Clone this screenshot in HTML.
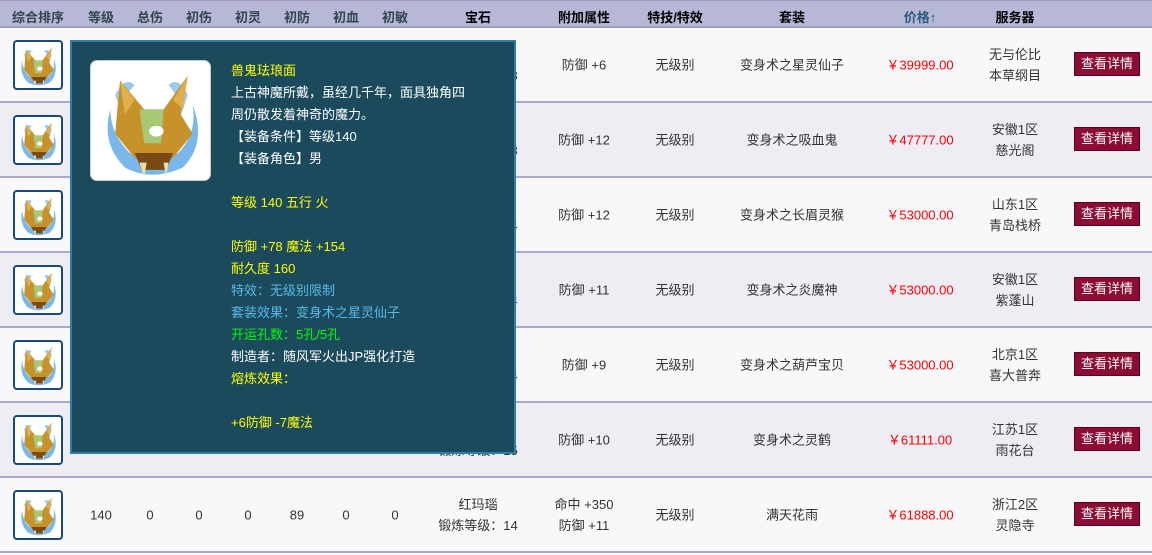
<!DOCTYPE html>
<html><head><meta charset="utf-8"><style>
*{margin:0;padding:0;box-sizing:border-box}
body{width:1152px;height:555px;overflow:hidden;background:#f8f8fb;font-family:"Liberation Sans","WenQuanYi Zen Hei","Noto Sans CJK SC",sans-serif;font-size:13px;color:#333;position:relative}
.hd{position:absolute;left:0;top:0;width:1152px;height:28px;background:#b6b8d6;border-top:1px solid #9a9cc4;border-bottom:2px solid #9a9cc4}
.hd span{position:absolute;top:6px;font-weight:bold;color:#34444f;transform:translateX(-50%);white-space:nowrap}
.row{position:absolute;left:0;width:1152px;height:75px;border-bottom:2px solid #a8aacb}
.row span{position:absolute;transform:translate(-50%,-50%);white-space:nowrap;text-align:center;line-height:21px}
.btn{position:absolute;left:1074px;width:66px;height:24px;background:#8c0c34;border:1px solid #5a0020;color:#fff;text-align:center;line-height:22px;font-size:13px}
.ic{position:absolute;left:13px;width:50px;height:50px;border:2px solid #1a4a7a;border-radius:4px;background:#fff;overflow:hidden}
.tip{position:absolute;left:70px;top:40px;width:446px;height:414px;background:#1a4a5c;border:2px solid #2a80a8}
.tip .img{position:absolute;left:18px;top:18px;width:121px;height:121px;background:#fff;border-radius:7px;border:1px solid #ccc;overflow:hidden}
.tip p{position:absolute;left:159px;white-space:nowrap;font-size:13px;line-height:22px}
.y{color:#ffff00}.w{color:#fff}.b{color:#5ab8e8}.g{color:#00ff00}
.red{color:#f00}
</style></head><body>
<div class="hd">
<span style="left:38px">综合排序</span><span style="left:101px">等级</span><span style="left:150px">总伤</span><span style="left:199px">初伤</span><span style="left:248px">初灵</span><span style="left:297px">初防</span><span style="left:346px">初血</span><span style="left:395px">初敏</span>
<span style="left:478px;color:#000">宝石</span><span style="left:584px;color:#000">附加属性</span><span style="left:675px;color:#000">特技/特效</span><span style="left:792px;color:#000">套装</span><span style="left:920px;color:#2a5a80">价格↑</span><span style="left:1015px;color:#000">服务器</span>
</div>

<svg width="0" height="0" style="position:absolute"><defs>
<g id="m">
<path d="M8 20 Q4 34 14 44 Q25 50 38 44 Q48 34 42 18 Q44 30 36 38 Q26 44 16 38 Q8 30 8 20Z" fill="#7ab8ec"/>
<path d="M10 14 Q14 6 18 10 Q12 16 14 26Z M40 14 Q36 6 32 10 Q38 16 36 26Z" fill="#9acaf0"/>
<path d="M12 8 L22 20 L30 20 L40 6 L37 22 L42 30 L34 40 L18 40 L10 30 Z" fill="#c8922a"/>
<path d="M12 8 L18 16 L14 22Z M40 6 L34 16 L38 20Z" fill="#e0b050"/>
<path d="M20 20 L30 20 L29 34 L22 34 Z" fill="#a8c878"/>
<ellipse cx="27" cy="29" rx="3" ry="2.2" fill="#fff"/>
<path d="M18 38 L34 38 L31 45 L21 45 Z" fill="#7a4a14"/>
<path d="M20 42 L22 48 L23 42Z M30 42 L31 48 L32 42Z" fill="#f0e0a0"/>
</g></defs></svg>

<div class="row" style="top:28px;background:#f8f8fb"></div>
<div class="row" style="top:103px;background:#ededf3"></div>
<div class="row" style="top:178px;background:#f8f8fb"></div>
<div class="row" style="top:253px;background:#ededf3"></div>
<div class="row" style="top:328px;background:#f8f8fb"></div>
<div class="row" style="top:403px;background:#ededf3"></div>
<div class="row" style="top:478px;background:#f8f8fb"></div>

<div id="cells"></div>
<script>
var d=[["+6","变身术之星灵仙子","39999.00","无与伦比","本草纲目"],["+12","变身术之吸血鬼","47777.00","安徽1区","慈光阁"],["+12","变身术之长眉灵猴","53000.00","山东1区","青岛栈桥"],["+11","变身术之炎魔神","53000.00","安徽1区","紫蓬山"],["+9","变身术之葫芦宝贝","53000.00","北京1区","喜大普奔"],["+10","变身术之灵鹤","61111.00","江苏1区","雨花台"],["+11","满天花雨","61888.00","浙江2区","灵隐寺"]];
var lv=["13","13","14","14","14","15","14"];
var h="";
for(var i=0;i<7;i++){var c=28+i*75+37;
h+='<div class="ic" style="top:'+(c-25)+'px"><svg width="46" height="46" viewBox="0 0 50 50"><use href="#m"/></svg></div>';
h+='<div class="row" style="top:'+(28+i*75)+'px;background:transparent;border:none">';
h+='<span style="left:101px;top:37px">140</span><span style="left:150px;top:37px">0</span><span style="left:199px;top:37px">0</span><span style="left:248px;top:37px">0</span><span style="left:297px;top:37px">89</span><span style="left:346px;top:37px">0</span><span style="left:395px;top:37px">0</span>';
h+='<span style="left:478px;top:37px">红玛瑙<br>锻炼等级：'+lv[i]+'</span>';
if(i==6)h+='<span style="left:584px;top:37px">命中 +350<br>防御 +11</span>';else h+='<span style="left:584px;top:37px">防御 '+d[i][0]+'</span>';
h+='<span style="left:675px;top:37px">无级别</span><span style="left:792px;top:37px">'+d[i][1]+'</span><span class="red" style="left:920px;top:37px">￥'+d[i][2]+'</span><span style="left:1015px;top:37px">'+d[i][3]+'<br>'+d[i][4]+'</span>';
h+='</div><div class="btn" style="top:'+(c-13)+'px">查看详情</div>';}
document.getElementById('cells').innerHTML=h;
</script>

<div class="tip">
<div class="img"><svg width="121" height="121" viewBox="0 0 50 50"><use href="#m"/></svg></div>
<p class="y" style="top:18px">兽鬼珐琅面</p>
<p class="w" style="top:40px">上古神魔所戴，虽经几千年，面具独角四</p>
<p class="w" style="top:62px">周仍散发着神奇的魔力。</p>
<p class="w" style="top:84px">【装备条件】等级140</p>
<p class="w" style="top:106px">【装备角色】男</p>
<p class="y" style="top:150px">等级 140 五行 火</p>
<p class="y" style="top:194px">防御 +78 魔法 +154</p>
<p class="y" style="top:216px">耐久度 160</p>
<p class="b" style="top:238px">特效：无级别限制</p>
<p class="b" style="top:260px">套装效果：变身术之星灵仙子</p>
<p class="g" style="top:282px">开运孔数：5孔/5孔</p>
<p class="w" style="top:304px">制造者：随风军火出JP强化打造</p>
<p class="y" style="top:326px">熔炼效果：</p>
<p class="y" style="top:370px">+6防御 -7魔法</p>
</div>
</body></html>
